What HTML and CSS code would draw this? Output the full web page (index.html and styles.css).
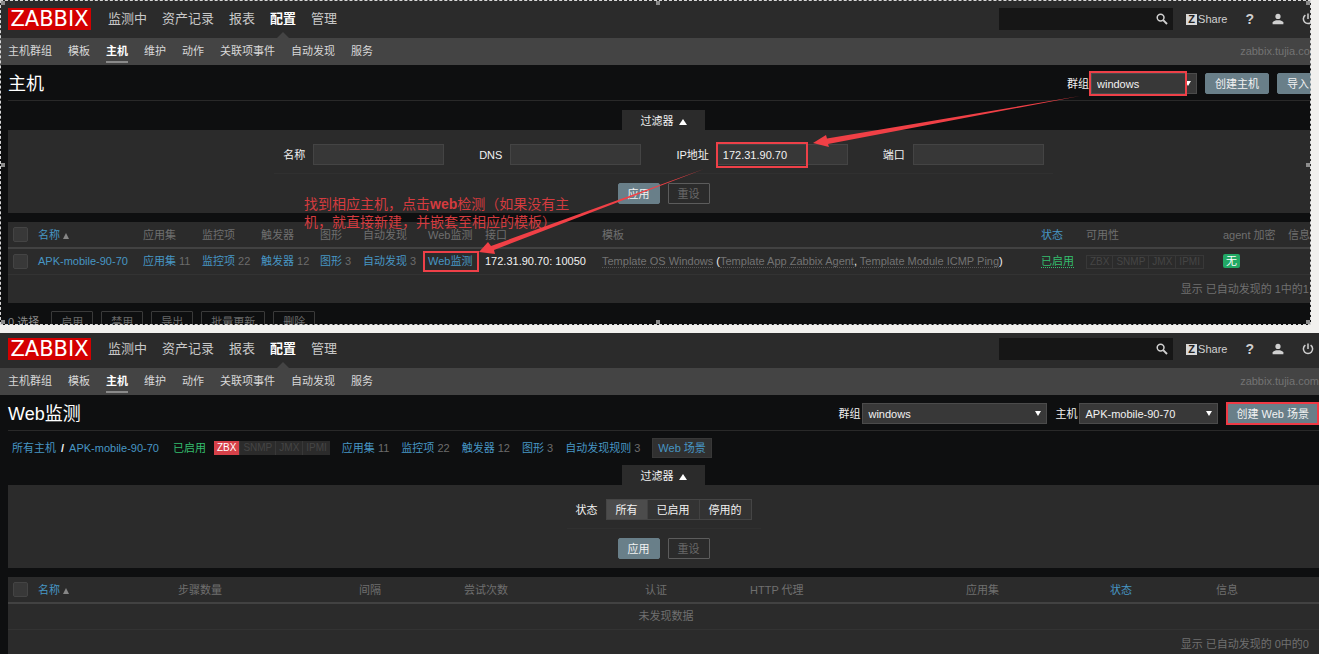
FILE: index.html
```html
<!DOCTYPE html>
<html lang="zh-CN">
<head>
<meta charset="utf-8">
<title>Zabbix</title>
<link rel="stylesheet" href="styles.css">
</head>
<body>
<svg class="defs" aria-hidden="true">
  <symbol id="i-search" viewBox="0 0 12 12"><circle cx="4.6" cy="4.6" r="3.4" fill="none" stroke="currentColor" stroke-width="1.5"/><path d="M7.2 7.2 L11 11" stroke="currentColor" stroke-width="1.9"/></symbol>
  <symbol id="i-user" viewBox="0 0 12 12"><circle cx="6" cy="3.4" r="2.6" fill="currentColor"/><path d="M.6 11.2 V9.6 Q1 7.9 4 7.2 H8 Q11 7.9 11.4 9.6 V11.2 Z" fill="currentColor"/></symbol>
  <symbol id="i-power" viewBox="0 0 12 12"><path d="M3.4 2.2 A4.6 4.6 0 1 0 8.6 2.2 M6 .4 V6" fill="none" stroke="currentColor" stroke-width="1.5"/></symbol>
</svg>

<section class="screen first">
  <div class="page">
    <header class="topbar">
      <a class="logo" href="#">ZABBIX</a>
      <nav class="menu"><a href="#">监测中</a><a href="#">资产记录</a><a href="#">报表</a><a href="#" class="on">配置</a><a href="#">管理</a></nav>
      <div class="tools">
        <div class="search"><input type="text" aria-label="搜索"><button type="button" aria-label="搜索"><svg><use href="#i-search"/></svg></button></div>
        <a class="share" href="#"><b>Z</b>Share</a>
        <a class="help" href="#">?</a>
        <a class="icon" href="#" aria-label="用户"><svg><use href="#i-user"/></svg></a>
        <a class="icon" href="#" aria-label="退出"><svg><use href="#i-power"/></svg></a>
      </div>
    </header>
    <nav class="subnav"><a href="#">主机群组</a><a href="#">模板</a><a href="#" class="on">主机</a><a href="#">维护</a><a href="#">动作</a><a href="#">关联项事件</a><a href="#">自动发现</a><a href="#">服务</a><span class="server">zabbix.tujia.com</span></nav>
    <main class="content">
      <div class="title">
        <h1>主机</h1>
        <label for="g1">群组</label>
        <span class="pick marked pick-s"><select id="g1"><option>windows</option></select></span>
        <button class="btn solid" type="button">创建主机</button>
        <button class="btn solid" type="button">导入</button>
      </div>
      <div class="tab-row hosts"><button class="tab" type="button">过滤器 <i></i></button></div>
      <form class="filter">
        <div class="fields">
          <label>名称<input type="text"></label>
          <label>DNS<input type="text"></label>
          <label>IP地址<span class="marked ip"><input type="text" value="172.31.90.70"></span></label>
          <label>端口<input type="text"></label>
        </div>
        <div class="actions"><button class="btn solid" type="button">应用</button><button class="btn line" type="button">重设</button></div>
      </form>
      <table class="list">
        <colgroup><col class="w25"><col class="w105"><col class="w59"><col class="w59"><col class="w59"><col class="w43"><col class="w65"><col class="w57"><col class="w117"><col><col class="w45"><col class="w137"><col class="w65"><col class="w36"></colgroup>
        <thead><tr><th><input type="checkbox" aria-label="全选"></th><th><a href="#">名称</a> <i class="sort"></i></th><th>应用集</th><th>监控项</th><th>触发器</th><th>图形</th><th>自动发现</th><th>Web监测</th><th>接口</th><th>模板</th><th><a href="#">状态</a></th><th>可用性</th><th>agent 加密</th><th>信息</th></tr></thead>
        <tbody>
          <tr><td><input type="checkbox" aria-label="APK-mobile-90-70"></td><td><a href="#">APK-mobile-90-70</a></td><td><a href="#">应用集</a> <small>11</small></td><td><a href="#">监控项</a> <small>22</small></td><td><a href="#">触发器</a> <small>12</small></td><td><a href="#">图形</a> <small>3</small></td><td><a href="#">自动发现</a> <small>3</small></td><td><span class="marked web"><a href="#">Web监测</a></span></td><td>172.31.90.70: 10050</td><td><a class="grey" href="#">Template OS Windows</a> (<a class="grey" href="#">Template App Zabbix Agent</a>, <a class="grey" href="#">Template Module ICMP Ping</a>)</td><td><a class="green dotted" href="#">已启用</a></td><td><span class="avail"><span>ZBX</span><span>SNMP</span><span>JMX</span><span>IPMI</span></span></td><td><span class="none">无</span></td><td></td></tr>
          <tr class="foot"><td colspan="14">显示 已自动发现的 1中的1</td></tr>
        </tbody>
      </table>
      <div class="bulk"><span>0 选择</span><button class="btn line" type="button">启用</button><button class="btn line" type="button">禁用</button><button class="btn line" type="button">导出</button><button class="btn line" type="button">批量更新</button><button class="btn line" type="button">删除</button></div>
    </main>
    <p class="note">找到相应主机，点击<b>web</b>检测（如果没有主<br>机，就直接新建，并嵌套至相应的模板）</p>
    <svg class="arrows" viewBox="0 0 1319 325" aria-hidden="true">
      <path d="M1080 96 L828 144 L829 147 L813 143 L826 135 L827 138.5 Z"/>
      <path d="M704 169 L494 250 L495 254 L479 252 L488 242 L491 246 Z"/>
    </svg>
  </div>
  <div class="frame"><i class="h tl"></i><i class="h tc"></i><i class="h tr"></i><i class="h ml"></i><i class="h mr"></i><i class="h bl"></i><i class="h bc"></i><i class="h br"></i></div>
</section>

<section class="screen second">
  <div class="page">
    <header class="topbar">
      <a class="logo" href="#">ZABBIX</a>
      <nav class="menu"><a href="#">监测中</a><a href="#">资产记录</a><a href="#">报表</a><a href="#" class="on">配置</a><a href="#">管理</a></nav>
      <div class="tools">
        <div class="search"><input type="text" aria-label="搜索"><button type="button" aria-label="搜索"><svg><use href="#i-search"/></svg></button></div>
        <a class="share" href="#"><b>Z</b>Share</a>
        <a class="help" href="#">?</a>
        <a class="icon" href="#" aria-label="用户"><svg><use href="#i-user"/></svg></a>
        <a class="icon" href="#" aria-label="退出"><svg><use href="#i-power"/></svg></a>
      </div>
    </header>
    <nav class="subnav"><a href="#">主机群组</a><a href="#">模板</a><a href="#" class="on">主机</a><a href="#">维护</a><a href="#">动作</a><a href="#">关联项事件</a><a href="#">自动发现</a><a href="#">服务</a><span class="server">zabbix.tujia.com</span></nav>
    <main class="content">
      <div class="title">
        <h1>Web监测</h1>
        <label for="g2">群组</label>
        <span class="pick pick-l"><select id="g2"><option>windows</option></select></span>
        <label for="h2">主机</label>
        <span class="pick pick-m"><select id="h2"><option>APK-mobile-90-70</option></select></span>
        <button class="btn solid hot" type="button">创建 Web 场景</button>
      </div>
      <div class="crumbs">
        <span class="path"><a href="#">所有主机</a><b>/</b><a href="#">APK-mobile-90-70</a></span>
        <span class="green state">已启用</span>
        <span class="avail full"><span class="red">ZBX</span><span>SNMP</span><span>JMX</span><span>IPMI</span></span>
        <span><a href="#">应用集</a> <small>11</small></span>
        <span><a href="#">监控项</a> <small>22</small></span>
        <span><a href="#">触发器</a> <small>12</small></span>
        <span><a href="#">图形</a> <small>3</small></span>
        <span><a href="#">自动发现规则</a> <small>3</small></span>
        <a class="current" href="#">Web 场景</a>
      </div>
      <div class="tab-row"><button class="tab" type="button">过滤器 <i></i></button></div>
      <form class="filter">
        <div class="fields narrow">
          <span>状态</span>
          <div class="seg"><label><input type="radio" name="st" checked>所有</label><label><input type="radio" name="st">已启用</label><label><input type="radio" name="st">停用的</label></div>
        </div>
        <div class="actions"><button class="btn solid" type="button">应用</button><button class="btn line" type="button">重设</button></div>
      </form>
      <table class="list">
        <colgroup><col class="w25"><col class="w140"><col class="w181"><col class="w105"><col class="w181"><col class="w105"><col><col class="w144"><col class="w106"><col class="w108"></colgroup>
        <thead><tr><th><input type="checkbox" aria-label="全选"></th><th><a href="#">名称</a> <i class="sort"></i></th><th>步骤数量</th><th>间隔</th><th>尝试次数</th><th>认证</th><th>HTTP 代理</th><th>应用集</th><th><a href="#">状态</a></th><th>信息</th></tr></thead>
        <tbody>
          <tr class="empty"><td colspan="10">未发现数据</td></tr>
          <tr class="foot"><td colspan="10">显示 已自动发现的 0中的0</td></tr>
        </tbody>
      </table>
    </main>
  </div>
</section>
</body>
</html>
```
FILE: styles.css
```css
*, *::before, *::after { box-sizing: border-box; }
body {
  margin: 0;
  height: 100vh;
  display: flex;
  flex-direction: column;
  gap: 8px;
  overflow: hidden;
  background: #f1f0ee;
  color: #f2f2f2;
  font: 11px/16px "Liberation Sans", "Noto Sans CJK SC", sans-serif;
}
a { color: #4796c4; text-decoration: none; }
button, input, select { font: inherit; color: inherit; margin: 0; }
.defs { display: none; }

.screen { position: relative; overflow: hidden; background: #0e0f10; }
.first { flex: 0 0 325px; margin-right: 8px; }
.first .page { width: calc(100% + 8px); }
.second { flex: 1; }
.page { position: relative; }

.topbar {
  display: flex;
  align-items: center;
  height: 38px;
  padding-left: 8px;
  background: #2b2b2b;
}
.second .topbar { height: 35px; padding-bottom: 3px; }
.logo {
  width: 83px;
  height: 22px;
  background: #d40000;
  color: #fff;
  font: 21px/22px "DejaVu Sans", sans-serif;
  text-align: center;
}
.menu { display: flex; gap: 15px; margin-left: 17px; font-size: 13px; line-height: 18px; }
.menu a { position: relative; color: #c8c8c8; }
.menu .on, .subnav .on { color: #fff; font-weight: bold; }
.menu .on::after {
  content: "";
  position: absolute;
  left: 7px;
  top: 22px;
  border: 6px solid transparent;
  border-top: 0;
  border-bottom-color: #444;
}
.tools { display: flex; align-items: center; margin-left: auto; padding-right: 5px; color: #d0d0d0; }
.tools a { color: inherit; }
.search { display: flex; align-items: center; width: 174px; height: 22px; background: #161616; }
.search input { flex: 1; min-width: 0; height: 20px; border: 0; padding: 0 5px; background: none; outline: 0; }
.search button { width: 22px; height: 20px; padding: 4px 5px; border: 0; background: none; color: #d0d0d0; }
.search svg, .icon svg { display: block; width: 12px; height: 12px; }
.share { display: flex; align-items: center; gap: 1px; margin-left: 13px; }
.share b {
  width: 11px;
  height: 11px;
  background: #d8d8d8;
  color: #222;
  font-size: 11px;
  line-height: 11px;
  text-align: center;
}
.help { margin-left: 18px; font-size: 14px; font-weight: bold; }
.icon { margin-left: 18px; }

.subnav { display: flex; gap: 16px; height: 27px; padding-left: 8px; background: #444; line-height: 26px; }
.subnav a { color: #d8d8d8; }
.subnav .on { height: 25px; border-bottom: 2px solid #8a8a8a; }
.server { margin-left: auto; color: #737373; }

.content { padding-left: 8px; }
.title { display: flex; align-items: center; height: 36px; padding-top: 2px; border-bottom: 1px solid #292929; }
.title h1 { margin: 0 auto 0 0; font-size: 18px; line-height: 24px; font-weight: normal; color: #fff; }
.title label + .pick { margin-left: 2px; }
.pick { position: relative; display: block; height: 21px; }
.pick select {
  appearance: none;
  display: block;
  width: 100%;
  height: 21px;
  padding: 0 5px;
  border: 1px solid #4b4b4b;
  border-radius: 0;
  background: #383838;
}
.pick::before {
  content: "";
  position: absolute;
  right: 6px;
  top: 8px;
  border: 3px solid transparent;
  border-top: 5px solid #fff;
  border-bottom: 0;
}
.pick-s { width: 106px; }
.pick-l { width: 185px; margin-right: 8px; }
.pick-m { width: 139px; }
.btn { height: 21px; padding: 0 9px; border: 1px solid #697f89; border-radius: 2px; line-height: 18px; white-space: nowrap; }
.solid { background: #697f89; }
.line { background: none; border-color: #5c5c5c; color: #696969; border-radius: 1px; }
.title .btn { margin-left: 8px; }
.title .hot { height: 23px; padding: 0 8px; border: 2px solid #ef3a45; border-radius: 0; }

.marked { position: relative; }
.marked::after { content: ""; position: absolute; border: 2px solid #ee4048; pointer-events: none; }
.pick-s.marked::after { left: -2px; top: -2px; width: 98px; height: 25px; }
.ip::after { left: -1px; top: -2px; width: 92px; height: 26px; }
.web::after { left: -5px; top: -4px; width: 56px; height: 21px; }

.tab-row { display: flex; justify-content: center; padding-top: 9px; }
.second .tab-row { padding-top: 7px; }
.tab { width: 83px; height: 20px; padding: 1px 0 0; border: 0; background: #2b2b2b; }
.tab i {
  display: inline-block;
  margin-left: 2px;
  border: 4px solid transparent;
  border-top: 0;
  border-bottom: 6px solid #fff;
}
.filter { display: flex; flex-direction: column; align-items: center; margin-bottom: 9px; padding: 14px 0 9px; background: #2b2b2b; }
.fields { display: flex; gap: 35px; padding: 0 9px 8px; border-bottom: 1px solid #303030; }
.fields label { display: flex; align-items: center; gap: 8px; }
.fields input[type="text"] { display: block; width: 131px; height: 21px; padding: 0 5px; border: 1px solid #444; background: #373737; outline: 0; }
.fields.narrow { align-items: center; gap: 8px; }
.seg { display: flex; border: 1px solid #454545; background: #333; }
.seg label { height: 19px; padding: 0 9px; border-left: 1px solid #424242; }
.seg label:first-child { border-left: 0; }
.seg label:has(:checked) { background: #4c4c4c; }
.seg input { position: absolute; opacity: 0; }
.actions { display: flex; gap: 8px; padding-top: 9px; }

.list { width: 100%; table-layout: fixed; border-collapse: collapse; background: #2b2b2b; white-space: nowrap; }
.list th, .list td { height: 26px; padding: 0 0 0 5px; text-align: left; font-weight: normal; border-bottom: 1px solid #333; }
.list th { color: #6f6f6f; border-bottom: 2px solid #424242; }
.list .foot td { height: 29px; padding: 0 10px 0 0; border: 0; color: #707070; text-align: right; }
.list .empty td { color: #707070; text-align: center; }
.list input {
  display: block;
  appearance: none;
  width: 15px;
  height: 15px;
  border: 1px solid #444;
  border-radius: 2px;
  background: #383838;
}
.sort { display: inline-block; border: 3px solid transparent; border-top: 0; border-bottom: 6px solid #868686; }
small { font-size: 11px; color: #6c6c6c; }
.list a.grey { color: #737373; border-bottom: 1px dotted #555; }
.green, a.green { color: #34bd6e; }
.dotted { border-bottom: 1px dotted #34bd6e; }
.avail { display: inline-flex; border: 1px solid #383838; color: #454545; font-size: 10px; line-height: 12px; vertical-align: middle; }
.avail span { padding: 0 3px; border-left: 1px solid #383838; }
.avail span:first-child { border-left: 0; }
.none { display: inline-block; height: 14px; padding: 0 3px; border-radius: 2px; background: #22a865; color: #fff; line-height: 14px; }
.w25 { width: 25px; } .w36 { width: 36px; } .w43 { width: 43px; } .w45 { width: 45px; }
.w57 { width: 57px; } .w59 { width: 59px; } .w65 { width: 65px; } .w105 { width: 105px; }
.w106 { width: 106px; } .w108 { width: 108px; } .w117 { width: 117px; } .w137 { width: 137px; }
.w140 { width: 140px; } .w144 { width: 144px; } .w181 { width: 181px; }
.bulk { display: flex; align-items: center; gap: 8px; padding-top: 8px; color: #8a8a8a; }
.bulk span { margin-right: 4px; }
.bulk .btn { border-color: #3a3a3a; }

.crumbs { display: flex; align-items: center; gap: 12px; padding: 7px 4px 0; }
.path { display: flex; gap: 5px; }
.state { margin-left: 2px; }
.avail.full { margin-left: -4px; border: 0; background: #2b2b2b; line-height: 14px; }
.avail .red { background: #d64149; color: #fff; }
.current { padding: 1px 5px; border: 1px solid #383838; background: #303030; }

.note { position: absolute; left: 304px; top: 195px; margin: 0; color: #d43b3f; font-size: 14px; line-height: 18px; white-space: nowrap; }
.arrows { position: absolute; left: 0; top: 0; width: 1319px; height: 325px; fill: #f04046; pointer-events: none; }
.frame { position: absolute; inset: 0; border: 1px dashed #d8d8d8; pointer-events: none; }
.h { position: absolute; width: 4px; height: 4px; background: #8c8c8c; }
.tl, .tc, .tr { top: 0; }
.ml, .mr { top: 50%; }
.bl, .bc, .br { bottom: 0; }
.tl, .ml, .bl { left: 0; }
.tc, .bc { left: 50%; }
.tr, .mr, .br { right: 0; }
```
